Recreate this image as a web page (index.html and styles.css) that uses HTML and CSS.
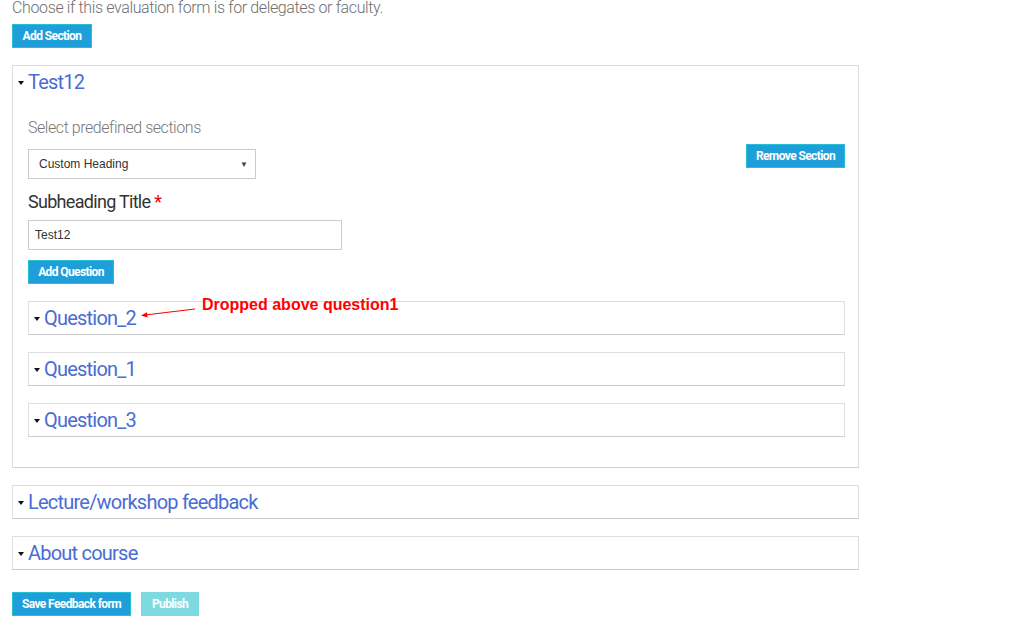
FILE: index.html
```html
<!DOCTYPE html>
<html>
<head>
<meta charset="utf-8">
<link rel="stylesheet" href="styles.css">
</head>
<body>
<div class="page">
  <p class="intro">Choose if this evaluation form is for delegates or faculty.</p>
  <button class="btn btn-add-section">Add Section</button>

  <div class="section">
    <div class="sec-head"><span class="caret"></span><span class="sec-title">Test12</span></div>
    <div class="sec-body">
      <div class="label-light">Select predefined sections</div>
      <div class="select-row">
        <div class="select"><span>Custom Heading</span><span class="sel-arrow">&#9660;</span></div>
        <button class="btn btn-remove">Remove Section</button>
      </div>
      <div class="label">Subheading Title <span class="req">*</span></div>
      <div class="input">Test12</div>
      <button class="btn btn-add-q">Add Question</button>
      <div class="questions">
        <div class="qbox"><span class="caret"></span><span class="sec-title">Question_2</span></div>
        <div class="qbox"><span class="caret"></span><span class="sec-title">Question_1</span></div>
        <div class="qbox"><span class="caret"></span><span class="sec-title">Question_3</span></div>
      </div>
    </div>
  </div>

  <div class="panel"><span class="caret"></span><span class="sec-title">Lecture/workshop feedback</span></div>
  <div class="panel"><span class="caret"></span><span class="sec-title">About course</span></div>

  <div class="actions">
    <button class="btn btn-save">Save Feedback form</button>
    <button class="btn btn-publish">Publish</button>
  </div>

  <div class="note">
    <svg class="note-arrow" width="60" height="14" viewBox="0 0 60 14">
      <line x1="55" y1="2" x2="5" y2="8" stroke="#ff0000" stroke-width="1.2"/>
      <polygon points="1,8.5 7,5.2 7.6,10.4" fill="#ff0000"/>
    </svg>
    <span class="note-text">Dropped above question1</span>
  </div>
</div>
</body>
</html>
```
FILE: styles.css
```css
html, body {
  margin: 0;
  padding: 0;
  background: #fff;
}
.page {
  position: relative;
  padding: 0 12px;
  width: 847px;
  font-family: Roboto, "Liberation Sans", sans-serif;
}
.intro {
  margin: 0;
  font-size: 16px;
  font-weight: 300;
  line-height: 16px;
  color: #6f6f6f;
  letter-spacing: -0.37px;
}
.btn {
  display: block;
  box-sizing: border-box;
  height: 24px;
  padding: 0;
  border: 1px solid #27bfd4;
  background: #1f9fda;
  color: #fff;
  font-family: Roboto, "Liberation Sans", sans-serif;
  font-weight: 700;
  font-size: 12px;
  letter-spacing: -0.6px;
  line-height: 22px;
  text-align: center;
  white-space: nowrap;
  cursor: pointer;
}
.btn-add-section { margin-top: 8px; width: 80px; }
.section {
  margin-top: 17px;
  border: 1px solid #dcdcdc;
  border-bottom-color: #cfcfcf;
}
.sec-head, .qbox, .panel {
  display: flex;
  align-items: center;
  height: 32px;
  padding-left: 5px;
}
.caret {
  width: 0;
  height: 0;
  border-left: 3.5px solid transparent;
  border-right: 3.5px solid transparent;
  border-top: 4px solid #111;
  margin-right: 4px;
  margin-top: 1px;
}
.sec-title {
  font-size: 20px;
  color: #4a6cd4;
  letter-spacing: -0.78px;
  line-height: 24px;
}
.sec-body {
  padding: 20px 13px 30px 15px;
}
.label-light {
  font-size: 16px;
  font-weight: 300;
  color: #777;
  line-height: 20px;
  letter-spacing: -0.45px;
}
.select-row {
  display: flex;
  justify-content: space-between;
  align-items: flex-start;
  margin-top: 11px;
}
.select {
  box-sizing: border-box;
  width: 228px;
  height: 30px;
  border: 1px solid #ccc;
  display: flex;
  align-items: center;
  justify-content: space-between;
  padding: 0 7px 0 10px;
  font-family: "Liberation Sans", Arial, sans-serif;
  font-size: 12px;
  color: #333;
}
.sel-arrow {
  font-size: 8px;
  color: #444;
}
.btn-remove { margin-top: -5px; width: 99px; }
.label {
  margin-top: 12px;
  font-size: 18px;
  line-height: 22px;
  color: #333;
  letter-spacing: -0.7px;
}
.req { color: #e00; }
.input {
  box-sizing: border-box;
  margin-top: 7px;
  width: 314px;
  height: 30px;
  border: 1px solid #ccc;
  padding: 0 6px;
  font-family: "Liberation Sans", Arial, sans-serif;
  font-size: 12px;
  line-height: 28px;
  color: #333;
}
.btn-add-q { margin-top: 10px; width: 86px; }
.questions {
  margin-top: 17px;
  display: flex;
  flex-direction: column;
  gap: 17px;
}
.qbox, .panel {
  border: 1px solid #dedede;
  border-bottom-color: #cccccc;
}
.panel { margin-top: 17px; }
.actions {
  display: flex;
  gap: 10px;
  margin-top: 22px;
}
.btn-save { width: 119px; }
.btn-publish {
  width: 58px;
  background: #7ddae1;
  border-color: #7ddae1;
}
.note {
  position: absolute;
  left: 140px;
  top: 296px;
  display: flex;
  align-items: flex-start;
}
.note-arrow { margin-top: 11px; }
.note-text {
  margin-left: 2px;
  font-family: "Liberation Sans", Arial, sans-serif;
  font-weight: 700;
  font-size: 16px;
  line-height: 18px;
  color: #ff0000;
}
```
